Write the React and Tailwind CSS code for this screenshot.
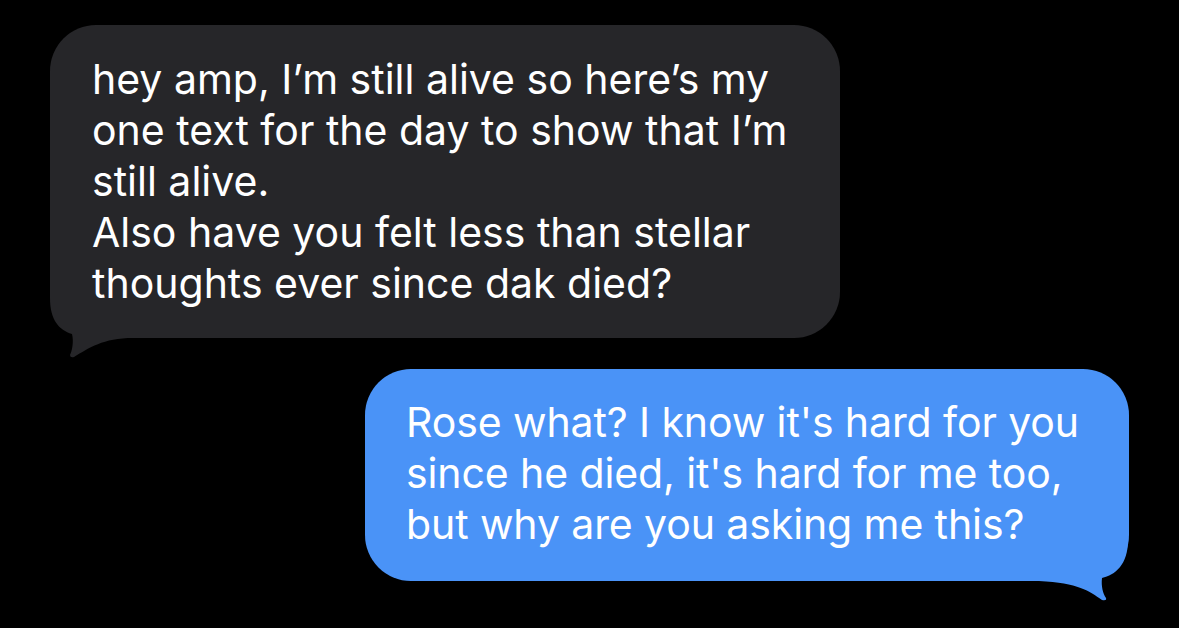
import React from "react";

export default function App() {
  const font = { fontFamily: "Inter, 'Noto Sans', sans-serif" };
  return (
    <div className="w-[1179px] h-[628px] bg-black overflow-hidden flex flex-col" style={font}>
      <div className="relative ml-[50px] mt-[25px] w-[790px] h-[313px] bg-[#262629] rounded-[46px]">
        <svg className="absolute left-[-5px] bottom-[-22px]" width="90" height="70" viewBox="0 0 90 70">
          <path d="M5 0 L5 8 C5 30 14 40 27 44 C29 52 27 61 25 65 Q25 68 29 67 C44 58 58 48 88 48 L88 0 Z" fill="#262629" />
        </svg>
        <div className="relative pl-[42px] pt-[29px] text-white text-[41px] leading-[51px]">
          <div>hey amp, I’m still alive so here’s my</div>
          <div>one text for the day to show that I’m</div>
          <div>still alive.</div>
          <div>Also have you felt less than stellar</div>
          <div>thoughts ever since dak died?</div>
        </div>
      </div>
      <div className="relative ml-[365px] mt-[31px] w-[764px] h-[212px] bg-[#4A93F7] rounded-[46px]">
        <svg className="absolute right-[-5px] bottom-[-24px]" width="95" height="75" viewBox="0 0 95 75">
          <path d="M89 0 L89 10 C89 35 76 45 63 48 C62 56 64 64 67 68 Q68 71 63 70 C50 61 40 53 0 51 L0 0 Z" fill="#4A93F7" />
        </svg>
        <div className="relative pl-[41px] pt-[28px] text-white text-[41px] leading-[51px] tracking-[-0.1px]">
          <div>Rose what? I know it's hard for you</div>
          <div>since he died, it's hard for me too,</div>
          <div>but why are you asking me this?</div>
        </div>
      </div>
    </div>
  );
}
